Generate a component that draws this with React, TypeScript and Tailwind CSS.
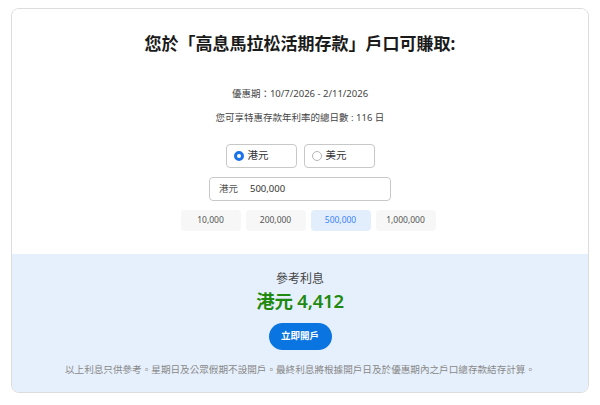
import { useState } from "react";

const AMOUNTS = ["10,000", "200,000", "500,000", "1,000,000"];

export default function App() {
  const [currency, setCurrency] = useState("HKD");
  const [amount, setAmount] = useState("500,000");

  return (
    <div className="w-[600px] h-[405px] bg-white pt-[8px] px-[11px] font-['Noto_Sans','Noto_Sans_CJK_TC',sans-serif]">
      <div className="w-[578px] h-[385px] rounded-[8px] border border-[#dcdcdc] overflow-hidden flex flex-col">
        <div className="h-[245px] bg-white flex flex-col items-center">
          <h2 className="mt-[24px] text-[17px] leading-[22px] font-bold text-[#1a1a1a]">
            您於「高息馬拉松活期存款」戶口可賺取:
          </h2>
          <p className="mt-[32px] text-[9.5px] leading-[14px] text-[#444]">優惠期：10/7/2026 - 2/11/2026</p>
          <p className="mt-[10px] text-[9.5px] leading-[14px] text-[#444]">您可享特惠存款年利率的總日數 : 116 日</p>

          <div className="mt-[19px] flex gap-[7px]">
            {[
              { id: "HKD", label: "港元" },
              { id: "USD", label: "美元" },
            ].map((c) => (
              <button
                key={c.id}
                onClick={() => setCurrency(c.id)}
                className="w-[71px] h-[24px] rounded-[4px] border border-[#c8c8c8] flex items-center pl-[7px] gap-[4px] text-[10.5px] text-[#333]"
              >
                {currency === c.id ? (
                  <span className="w-[10px] h-[10px] rounded-full border-[3px] border-[#1a73e8]" />
                ) : (
                  <span className="w-[10px] h-[10px] rounded-full border border-[#b5b5b5]" />
                )}
                {c.label}
              </button>
            ))}
          </div>

          <div className="mt-[9px] w-[182px] h-[24px] rounded-[4px] border border-[#c8c8c8] flex items-center pl-[9px] text-[9.5px] text-[#333]">
            <span className="w-[31px] text-[#555]">港元</span>
            <span>{amount}</span>
          </div>

          <div className="mt-[9px] ml-[16px] flex gap-[5px]">
            {AMOUNTS.map((a) => (
              <button
                key={a}
                onClick={() => setAmount(a)}
                className={
                  a === amount
                    ? "w-[60px] h-[21px] rounded-[4px] bg-[#e3eefc] text-[8.5px] text-[#3b82f6]"
                    : "w-[60px] h-[21px] rounded-[4px] bg-[#f7f7f7] text-[8.5px] text-[#555]"
                }
              >
                {a}
              </button>
            ))}
          </div>
        </div>

        <div className="flex-1 bg-[#e6f0fc] flex flex-col items-center">
          <p className="mt-[17px] text-[12px] leading-[16px] text-[#444]">參考利息</p>
          <p className="mt-[1px] text-[18.5px] leading-[25px] font-semibold tracking-[-0.2px] text-[#1f8a0f]">港元 4,412</p>
          <button className="mt-[10px] w-[63px] h-[27px] rounded-full bg-[#0a74e0] text-white text-[9.5px] font-semibold">
            立即開戶
          </button>
          <p className="mt-[14px] text-[9.6px] leading-[12px] text-[#888]">
            以上利息只供參考。星期日及公眾假期不設開戶。最終利息將根據開戶日及於優惠期內之戶口總存款結存計算。
          </p>
        </div>
      </div>
    </div>
  );
}
